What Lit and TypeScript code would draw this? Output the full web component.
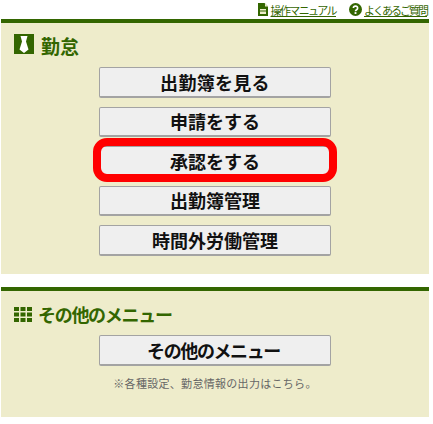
import { LitElement, html, css } from 'lit';
import { customElement } from 'lit/decorators.js';

@customElement('app-root')
export class AppRoot extends LitElement {
    static styles = css`
        :host {
            display: block;
            width: 433px;
            height: 424px;
            background: #fff;
            font-family: "Noto Sans CJK JP", "Noto Sans", sans-serif;
            overflow: hidden;
        }
        .links {
            display: flex;
            justify-content: flex-end;
            align-items: center;
            gap: 13px;
            height: 19px;
            padding: 0 6px 0 0;
            font-size: 11px;
            letter-spacing: -1.6px;
        }
        .links a {
            display: flex;
            align-items: center;
            gap: 3px;
            color: #336600;
            text-decoration: underline;
        }
        .links a.faq {
            gap: 2px;
            letter-spacing: -2px;
        }
        .panel {
            margin: 0 4px 0 1px;
            background: #eeeccb;
            border-top: 4px solid #336600;
        }
        .panel.attendance {
            height: 251px;
            margin-bottom: 13px;
        }
        .panel.other {
            height: 126px;
        }
        h2 {
            display: flex;
            align-items: center;
            margin: 0;
            color: #336600;
            font-weight: 700;
            line-height: 24px;
        }
        .attendance h2 {
            gap: 7px;
            padding: 11px 0 0 13px;
            font-size: 19px;
        }
        .attendance h2 svg {
            margin-bottom: 4px;
        }
        .other h2 {
            gap: 6px;
            padding: 11px 0 1px 13px;
            font-size: 18px;
            letter-spacing: -1.3px;
        }
        .menu {
            display: flex;
            flex-direction: column;
            align-items: center;
            gap: 9px;
        }
        .attendance .menu {
            padding-top: 9px;
        }
        .other .menu {
            padding-top: 8px;
        }
        .btn {
            position: relative;
            box-sizing: border-box;
            width: 232px;
            height: 30.5px;
            display: flex;
            align-items: center;
            justify-content: center;
            background: #efefef;
            border: 1px solid #a3a3a3;
            border-bottom-width: 2px;
            border-radius: 2px;
            color: #111;
            font-size: 18px;
            font-weight: 700;
        }
        .btn.wide {
            letter-spacing: 0.3px;
        }
        .btn.tight {
            letter-spacing: -1.4px;
            padding-right: 3px;
        }
        .btn.marked::after {
            content: "";
            position: absolute;
            inset: -9px -7px -7px -7px;
            border: 8.5px solid #ff0000;
            border-radius: 14px;
        }
        .note {
            margin: 8px 0 0;
            color: #666;
            font-size: 11px;
            line-height: 18px;
            letter-spacing: 0.3px;
            text-align: center;
        }
    `;

    render() {
        return html`
            <div class="links">
                <a>
                    <svg width="10" height="13" viewBox="0 0 10 13">
                        <path d="M0 0h6.5L10 3.5V13H0z" fill="#336600"></path>
                        <path d="M7 .5v3h3" fill="#eeeccb"></path>
                        <path d="M2 6h6v5H2z" fill="#eeeccb"></path>
                        <path d="M2 8h6" stroke="#336600" stroke-width="1"></path>
                    </svg>
                    操作マニュアル
                </a>
                <a class="faq">
                    <svg width="13" height="13" viewBox="0 0 14 14">
                        <circle cx="7" cy="7" r="7" fill="#336600"></circle>
                        <path d="M4.7 5.4a2.3 2.1 0 1 1 3.5 1.8c-.9.6-1.2 1-1.2 1.6" fill="none" stroke="#fff" stroke-width="1.8"></path>
                        <rect x="6" y="9.8" width="2" height="2" fill="#fff"></rect>
                    </svg>
                    よくあるご質問
                </a>
            </div>
            <section class="panel attendance">
                <h2>
                    <svg width="20" height="20" viewBox="0 0 20 20">
                        <rect width="20" height="20" fill="#336600"></rect>
                        <path d="M6.500 2h7L12 7.500l2.500 8L10 19l-4.500-3.500 2.500-8z" fill="#fff"></path>
                    </svg>
                    勤怠
                </h2>
                <div class="menu">
                    <div class="btn wide">出勤簿を見る</div>
                    <div class="btn">申請をする</div>
                    <div class="btn marked">承認をする</div>
                    <div class="btn">出勤簿管理</div>
                    <div class="btn">時間外労働管理</div>
                </div>
            </section>
            <section class="panel other">
                <h2>
                    <svg width="18" height="15" viewBox="0 0 18 15" fill="#336600">
                        <rect x="0" y="0" width="5" height="4"></rect>
                        <rect x="6.500" y="0" width="5" height="4"></rect>
                        <rect x="13" y="0" width="5" height="4"></rect>
                        <rect x="0" y="5.500" width="5" height="4"></rect>
                        <rect x="6.500" y="5.500" width="5" height="4"></rect>
                        <rect x="13" y="5.500" width="5" height="4"></rect>
                        <rect x="0" y="11" width="5" height="4"></rect>
                        <rect x="6.500" y="11" width="5" height="4"></rect>
                        <rect x="13" y="11" width="5" height="4"></rect>
                    </svg>
                    その他のメニュー
                </h2>
                <div class="menu">
                    <div class="btn tight">その他のメニュー</div>
                </div>
                <p class="note">※各種設定、勤怠情報の出力はこちら。</p>
            </section>
        `;
    }
}
